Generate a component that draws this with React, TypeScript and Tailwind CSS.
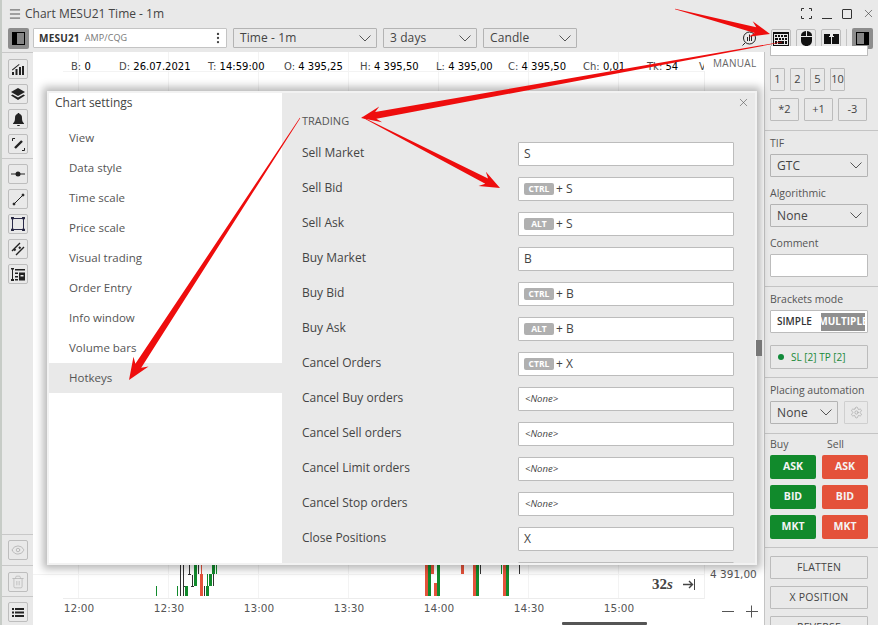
import { EllipsisVertical, Eye, Menu, Settings, Trash2, X } from "lucide-react";
import type { ReactNode } from "react";

const hotkeys: { label: string; mod?: string; key?: string; none?: boolean }[] = [
  { label: "Sell Market", key: "S" },
  { label: "Sell Bid", mod: "CTRL", key: "S" },
  { label: "Sell Ask", mod: "ALT", key: "S" },
  { label: "Buy Market", key: "B" },
  { label: "Buy Bid", mod: "CTRL", key: "B" },
  { label: "Buy Ask", mod: "ALT", key: "B" },
  { label: "Cancel Orders", mod: "CTRL", key: "X" },
  { label: "Cancel Buy orders", none: true },
  { label: "Cancel Sell orders", none: true },
  { label: "Cancel Limit orders", none: true },
  { label: "Cancel Stop orders", none: true },
  { label: "Close Positions", key: "X" },
  { label: "Reverse", none: true },
];

const navItems = ["View", "Data style", "Time scale", "Price scale", "Visual trading", "Order Entry", "Info window", "Volume bars"];

const infoItems = [
  ["B:", "0"],
  ["D:", "26.07.2021"],
  ["T:", "14:59:00"],
  ["O:", "4 395,25"],
  ["H:", "4 395,50"],
  ["L:", "4 395,00"],
  ["C:", "4 395,50"],
  ["Ch:", "0,01"],
  ["Tk:", "54"],
  ["V:", "54"],
];

// [x, y, w, h, color]
const candles: [number, number, number, number, string][] = [
  [156, 586, 1, 10, "#118a2c"],
  [177, 586, 1, 10, "#118a2c"],
  [180, 565, 1, 31, "#333"],
  [183, 565, 1, 31, "#333"],
  [183, 586, 3, 1, "#333"],
  [185, 586, 3, 10, "#118a2c"],
  [189, 565, 1, 9, "#333"],
  [188, 574, 3, 1, "#333"],
  [192, 575, 1, 11, "#333"],
  [191, 586, 3, 1, "#333"],
  [194, 565, 3, 21, "#118a2c"],
  [198, 565, 1, 9, "#333"],
  [201, 565, 1, 9, "#e4523a"],
  [200, 574, 3, 22, "#e4523a"],
  [204, 586, 1, 10, "#333"],
  [206, 586, 3, 10, "#118a2c"],
  [207, 574, 1, 12, "#118a2c"],
  [209, 574, 3, 12, "#118a2c"],
  [213, 574, 1, 12, "#333"],
  [212, 565, 3, 9, "#118a2c"],
  [216, 565, 1, 9, "#118a2c"],
  [425, 565, 3, 31, "#e4523a"],
  [428, 565, 3, 31, "#118a2c"],
  [431, 565, 3, 9, "#e4523a"],
  [434, 583, 3, 13, "#e4523a"],
  [437, 565, 3, 31, "#118a2c"],
  [461, 565, 3, 9, "#e4523a"],
  [473, 565, 3, 31, "#e4523a"],
  [476, 565, 3, 31, "#118a2c"],
  [480, 565, 1, 9, "#333"],
  [501, 565, 1, 9, "#118a2c"],
  [503, 565, 3, 31, "#e4523a"],
  [506, 565, 3, 31, "#118a2c"],
  [519, 565, 1, 9, "#333"],
];

const gridX = [78, 168, 258, 348, 438, 528, 618];
const timeLabels = ["12:00", "12:30", "13:00", "13:30", "14:00", "14:30", "15:00"];

function ToolBtn({ children, dim }: { children: ReactNode; dim?: boolean }) {
  return (
    <div className={`flex h-5 w-5 items-center justify-center rounded-[2px] border border-[#bdbdbd] ${dim ? "text-[#b5b5b5]" : "text-[#222]"}`}>
      {children}
    </div>
  );
}

function PanelToggle({ flip }: { flip?: boolean }) {
  return (
    <div className="flex h-[21px] w-[21px] items-center justify-center rounded-[2px] bg-[#8d8d8d]">
      <div className={`flex h-[13px] w-[13px] border border-black ${flip ? "flex-row-reverse" : ""}`}>
        <div className="w-[4px] bg-black" />
        <div className="flex-1 bg-[#858585]" />
      </div>
    </div>
  );
}

function Select({ value, className }: { value: string; className: string }) {
  return (
    <div className={`flex h-[23px] items-center justify-between rounded-[1px] border border-[#b3b3b3] pl-[6px] pr-[5px] text-[12px] tracking-[0.1px] text-[#444] ${className}`}>
      <span>{value}</span>
      <svg width="12" height="7" viewBox="0 0 12 7" fill="none" stroke="#555" strokeWidth="1">
        <path d="M.5.5 6 6l5.500-5.500" />
      </svg>
    </div>
  );
}

function Arrow({ from, to, head, spread, tail, neck }: { from: number[]; to: number[]; head: number; spread: number; tail: number; neck: number }) {
  const dx = to[0] - from[0];
  const dy = to[1] - from[1];
  const len = Math.hypot(dx, dy);
  const ux = dx / len;
  const uy = dy / len;
  const nx = -uy;
  const ny = ux;
  const bx = to[0] - ux * head;
  const by = to[1] - uy * head;
  const pts = [
    [from[0] + (nx * tail) / 2, from[1] + (ny * tail) / 2],
    [bx + (nx * neck) / 2 + ux * 3, by + (ny * neck) / 2 + uy * 3],
    [bx + nx * spread - ux * 2, by + ny * spread - uy * 2],
    to,
    [bx - nx * spread - ux * 2, by - ny * spread - uy * 2],
    [bx - (nx * neck) / 2 + ux * 3, by - (ny * neck) / 2 + uy * 3],
    [from[0] - (nx * tail) / 2, from[1] - (ny * tail) / 2],
  ];
  return <polygon points={pts.map((p) => p.join(",")).join(" ")} fill="#ee0d0d" />;
}

function HotkeyRow({ label, mod, keyName, none }: { label: string; mod?: string; keyName?: string; none?: boolean }) {
  return (
    <div className="flex h-[35px] shrink-0 items-start">
      <div className="w-[216px] pt-[2px] text-[12px] text-[#444]">{label}</div>
      <div className="flex h-6 w-[216px] items-center rounded-[1px] border border-[#bcbcbc] bg-white px-[5px] text-[12px] text-[#444]">
        {none && <span className="pl-px text-[9.5px] italic text-[#444]">&lt;None&gt;</span>}
        {mod && <span className="mr-[2px] flex h-[12px] w-[30px] items-center justify-center rounded-[2px] bg-[#b0b0b0] text-[8.500px] font-bold text-white">{mod}</span>}
        {mod && <span>+&nbsp;</span>}
        {keyName && <span>{keyName}</span>}
      </div>
    </div>
  );
}

export default function App() {
  return (
    <div className="relative flex h-[625px] w-[878px] flex-col overflow-hidden border-l-2 border-[#c7ccc7] bg-[#e9e9e9] font-['Open_Sans',sans-serif] text-[#444]">
      {/* title bar */}
      <div className="flex h-[26px] shrink-0 items-center pl-[6px] pr-[3px] pt-[1px]">
        <Menu size={14} strokeWidth={1.5} className="text-[#444]" />
        <span className="ml-[3px] text-[12px]">Chart MESU21 Time - 1m</span>
        <div className="ml-auto flex items-center gap-[10px] text-[#333]">
          <svg width="11" height="11" viewBox="0 0 11 11" fill="none" stroke="#333" strokeWidth="1">
            <path d="M.5 3V.5H3M8 .5h2.500V3M10.500 8v2.500H8M3 10.500H.5V8" />
          </svg>
          <div className="mt-[9px] h-px w-[10px] bg-[#333]" />
          <div className="h-[10px] w-[10px] rounded-[1px] border border-[#333]" />
          <X size={13} strokeWidth={1.1} />
        </div>
      </div>

      {/* toolbar */}
      <div className="flex h-[26px] shrink-0 items-start pl-[6px] pr-[5px] pt-[2px]">
        <PanelToggle />
        <div className="ml-[4px] flex h-[20px] w-[194px] items-center rounded-[1px] border border-[#c4c4c4] bg-white pl-[5px] pr-[1px]">
          <span className="text-[10px] font-bold tracking-[0.2px] text-[#333]">MESU21</span>
          <span className="ml-[5px] text-[9px] tracking-[0.1px] text-[#777]">AMP/CQG</span>
          <EllipsisVertical size={14} className="ml-auto text-[#444]" />
        </div>
        <Select value="Time - 1m" className="ml-[6px] !h-[20px] w-[144px]" />
        <Select value="3 days" className="ml-[6px] !h-[20px] w-[94px]" />
        <Select value="Candle" className="ml-[6px] !h-[20px] w-[94px]" />
        <div className="ml-auto flex items-center">
          <div className="mr-[14px] flex h-5 w-4 items-center justify-center">
            <svg width="16" height="16" viewBox="0 0 16 16" fill="none" stroke="#222" strokeWidth="1">
              <circle cx="8.500" cy="7" r="6" />
              <path d="M4 12 1.500 14.500M6.500 10V6M8.500 10V3.500M10.500 10V5" />
            </svg>
          </div>
          <ToolBtn>
            <svg width="16" height="14" viewBox="0 0 16 14" fill="#111">
              <path d="M0 0h16v14H0zM1 2v11h14V2z" />
              <path d="M2 3h2v2H2zM5 3h2v2H5zM8 3h2v2H8zM11 3h3v2h-3zM2 6h3v2H2zM6 6h2v2H6zM9 6h2v2H9zM12 6h2v2h-2zM2 9h2v3H2zM5 9h6v3H5zM12 9h2v3h-2z" />
            </svg>
          </ToolBtn>
          <div className="ml-[5px]">
            <ToolBtn>
              <svg width="11" height="15" viewBox="0 0 11 15" fill="#111">
                <path d="M5 0v5H0V4.500C0 2 2 .2 5 0zM6 0c3 .2 5 2 5 4.500V5H6zM0 6h11v3.500C11 12.800 8.800 15 5.500 15S0 12.800 0 9.500z" />
              </svg>
            </ToolBtn>
          </div>
          <div className="ml-[5px]">
            <ToolBtn>
              <svg width="15" height="10" viewBox="0 0 15 10" fill="#111">
                <path d="M0 0h6v2H5v1h2v7H0zM9 0h6v10H8V3h2V2H9z" />
              </svg>
            </ToolBtn>
          </div>
          <div className="mx-[5px] h-5 w-px bg-[#c4c4c4]" />
          <PanelToggle flip />
        </div>
      </div>

      <div className="flex min-h-0 flex-1">
        {/* left tools */}
        <div className="flex w-[31px] shrink-0 flex-col border-t border-[#c8c8c8] pl-[6px] pt-[6px]">
          <div className="flex flex-col gap-[5px] pb-[4px]">
            <ToolBtn>
              <svg width="12" height="12" viewBox="0 0 12 12" fill="#222">
                <path d="M0 9h2v3H0zM3.500 6h2v6h-2zM7 4h2v8H7zM10 3h2v9h-2zM0 6.500 7 1l.5.800L.5 7.500z" />
              </svg>
            </ToolBtn>
            <ToolBtn>
              <svg width="14" height="12" viewBox="0 0 14 12" fill="#222">
                <path d="M7 0l7 4-7 4-7-4zM1.500 6.500 7 9.600l5.500-3.100L14 7.500 7 12 0 7.500z" />
              </svg>
            </ToolBtn>
            <ToolBtn>
              <svg width="11" height="13" viewBox="0 0 11 13" fill="#222">
                <path d="M5.500 0C6.200 0 6.500.4 6.500 1 8.500 1.500 9 3 9 5c0 2.500.5 4 2 5.500V11H0v-.5C1.500 9 2 7.500 2 5c0-2 .5-3.500 2.500-4 0-.6.300-1 1-1zM4 12h3c0 .6-.7 1-1.500 1S4 12.600 4 12z" />
              </svg>
            </ToolBtn>
            <ToolBtn>
              <svg width="13" height="13" viewBox="0 0 13 13" fill="none" stroke="#222">
                <path d="M.5 3V.5H3M10 12.500h2.500V10" />
                <path d="M3 10 10 3" strokeWidth="2.400" />
              </svg>
            </ToolBtn>
          </div>
          <div className="-ml-[6px] mb-[5px] h-px bg-[#c8c8c8]" />
          <div className="flex flex-col gap-[5px]">
            <ToolBtn>
              <svg width="14" height="6" viewBox="0 0 14 6" fill="#222">
                <path d="M0 2.500h14v1H0z" />
                <circle cx="7" cy="3" r="2.500" />
              </svg>
            </ToolBtn>
            <ToolBtn>
              <svg width="13" height="13" viewBox="0 0 13 13" fill="#222" stroke="#222">
                <path d="M2 11 11 2" />
                <circle cx="2" cy="11" r="1" />
                <circle cx="11" cy="2" r="1" />
              </svg>
            </ToolBtn>
            <ToolBtn>
              <svg width="14" height="14" viewBox="0 0 14 14" fill="none" stroke="#2a2a4a">
                <rect x="1.500" y="1.500" width="11" height="11" />
                <path d="M.5 0h2v2h-2zM11.500 0h2v2h-2zM.5 12h2v2h-2zM11.500 12h2v2h-2z" fill="#222" />
              </svg>
            </ToolBtn>
            <ToolBtn>
              <svg width="14" height="14" viewBox="0 0 14 14" fill="none" stroke="#222" strokeWidth="1.400">
                <path d="M1 9 9 1M5 13l8-8" />
                <path d="M3 7l1.500 1.500M8 5l1.500 1.500" strokeWidth="2" />
              </svg>
            </ToolBtn>
            <ToolBtn>
              <svg width="14" height="13" viewBox="0 0 14 13" fill="#222">
                <path d="M0 0h3v1.500H2V11h1v2H0v-2h1V1.500H0zM4 1h10v1.500H4zM4 4.500h3V6H4zM4 8h3v1.500H4zM4 11h3v1.500H4zM8 4.500h6v8H8zM9.500 7v1.500h3V7z" />
              </svg>
            </ToolBtn>
          </div>
          <div className="mt-auto flex flex-col">
            <div className="-ml-[6px] mb-[5px] h-px bg-[#c8c8c8]" />
            <ToolBtn dim>
              <Eye size={14} strokeWidth={1.5} />
            </ToolBtn>
            <div className="-ml-[6px] mb-[6px] mt-[5px] h-px bg-[#c8c8c8]" />
            <ToolBtn dim>
              <Trash2 size={14} strokeWidth={1.3} />
            </ToolBtn>
            <div className="-ml-[6px] mb-[5px] mt-[4px] h-px bg-[#c8c8c8]" />
            <div className="mb-[3px]">
              <ToolBtn>
                <svg width="12" height="9" viewBox="0 0 12 9" fill="#222">
                  <path d="M0 0h2v2H0zM3 0h9v2H3zM0 3.500h2v2H0zM3 3.500h9v2H3zM0 7h2v2H0zM3 7h9v2H3z" />
                </svg>
              </ToolBtn>
            </div>
          </div>
        </div>

        {/* chart */}
        <div className="relative w-[731px] shrink-0 bg-white">
          <svg className="absolute left-0 top-0" width="731" height="573" viewBox="33 52 731 573">
            {gridX.map((x) => (
              <rect key={x} x={x} y={52} width={1} height={546} fill="#f3f3f3" />
            ))}
            <rect x={63} y={71} width={641} height={1} fill="#f3f3f3" />
            <rect x={33} y={574} width={672} height={1} fill="#f3f3f3" />
            <rect x={63} y={598} width={642} height={1} fill="#ececec" />
            <rect x={704} y={52} width={1} height={547} fill="#f0f0f0" />
            {candles.map(([x, y, w, h, c], i) => (
              <rect key={i} x={x} y={y} width={w} height={h} fill={c} />
            ))}
            {timeLabels.map((t, i) => (
              <text key={t} x={gridX[i] + 1} y={612} textAnchor="middle" fontFamily="DejaVu Sans" fontSize="10.500" fill="#555">
                {t}
              </text>
            ))}
            <text x={710} y={578} fontFamily="DejaVu Sans" fontSize="10.500" fill="#555">4 391,00</text>
            <text x={652} y={589} fontFamily="Liberation Serif" fontSize="15" fontWeight="bold" fill="#444">
              32<tspan fontStyle="italic">s</tspan>
            </text>
            <path d="M683 584.500h9M689 581l3.500 3.500L689 588" stroke="#444" strokeWidth="1.400" fill="none" />
            <rect x={694} y={579} width={1} height={11} fill="#444" />
            <rect x={722} y={611} width={12} height={1} fill="#555" />
            <path d="M746 611.500h12M751.500 605.500v12" stroke="#555" fill="none" />
            <rect x={562} y={622} width={85} height={3} rx={1} fill="#555" />
          </svg>

          <div className="relative flex h-[22px] items-start">
            <div className="grid flex-1 grid-cols-[48px_89px_76px_76px_76px_72px_75px_64px_52px_auto] overflow-hidden whitespace-nowrap pl-[38px] pt-[7px] font-['DejaVu_Sans',sans-serif] text-[10px] text-black">
              {infoItems.map(([k, v]) => (
                <span key={k}>
                  <span className="text-[#4a4a4a]">{k}</span> {v}
                </span>
              ))}
            </div>
            <div className="w-[60px] shrink-0 bg-white pl-[9px] pt-[4px] text-[10px] tracking-[0.3px] text-[#666]">MANUAL</div>
          </div>
        </div>

        {/* order panel */}
        <div className="flex min-w-0 flex-1 flex-col border-l border-[#c4c4c4] px-[5px] [&>*]:shrink-0">
          <div className="-mt-[6px] h-[10px] w-[98px] rounded-b-[1px] border border-t-0 border-[#bcbcbc] bg-white" />
          <div className="mt-[12px] flex gap-[5px] text-[11px] text-[#444]">
            {["1", "2", "5", "10"].map((n) => (
              <div key={n} className="flex h-[23px] w-[15px] items-center justify-center rounded-[1px] border border-[#bcbcbc]">{n}</div>
            ))}
          </div>
          <div className="mt-[7px] flex gap-[5px] text-[11px] text-[#444]">
            {["*2", "+1", "-3"].map((n) => (
              <div key={n} className="flex h-[23px] w-[29px] items-center justify-center rounded-[1px] border border-[#bcbcbc]">{n}</div>
            ))}
          </div>
          <div className="-mx-[5px] mt-[9px] h-px bg-[#c4c4c4]" />

          <div className="h-[23px] pt-[5px] text-[10.500px] leading-[15px] text-[#555]">TIF</div>
          <Select value="GTC" className="w-[98px]" />
          <div className="h-[27px] pt-[9px] text-[10.500px] leading-[15px] text-[#555]">Algorithmic</div>
          <Select value="None" className="w-[98px]" />
          <div className="h-[27px] pt-[9px] text-[10.500px] leading-[15px] text-[#555]">Comment</div>
          <div className="h-[23px] w-[98px] rounded-[1px] border border-[#bcbcbc] bg-white" />
          <div className="-mx-[5px] mt-[9px] h-px bg-[#c4c4c4]" />

          <div className="h-[23px] pt-[5px] text-[10.500px] leading-[15px] text-[#555]">Brackets mode</div>
          <div className="flex h-[23px] w-[98px] items-center rounded-[1px] border border-[#bcbcbc] bg-white pl-[6px] pr-[2px] text-[10px] font-semibold">
            <span className="w-[44px] text-[#333]">SIMPLE</span>
            <span className="flex h-[18px] w-[44px] items-center justify-center overflow-hidden bg-[#8f8f8f] font-bold text-white">MULTIPLE</span>
          </div>
          <div className="mt-[12px] flex h-[24px] w-[98px] items-center rounded-[1px] border border-[#bcbcbc] pl-[7px] text-[10px] text-[#1a8a3a]">
            <span className="mr-[7px] h-[6px] w-[6px] rounded-full bg-[#118a3a]" />
            SL [2] TP [2]
          </div>
          <div className="-mx-[5px] mt-[8px] h-px bg-[#c4c4c4]" />

          <div className="h-[23px] pt-[5px] text-[10.500px] leading-[15px] text-[#555]">Placing automation</div>
          <div className="flex gap-[6px]">
            <Select value="None" className="w-[68px]" />
            <div className="flex h-[23px] w-[24px] items-center justify-center rounded-[1px] border border-[#cfcfcf] text-[#aaa]">
              <Settings size={13} strokeWidth={1.4} />
            </div>
          </div>
          <div className="-mx-[5px] mt-[9px] h-px bg-[#c4c4c4]" />

          <div className="flex h-[21px] pt-[3px] text-[10.500px] leading-[15px] text-[#555]">
            <span className="w-[57px]">Buy</span>
            <span>Sell</span>
          </div>
          <div className="grid w-[98px] grid-cols-2 gap-x-[6px] gap-y-[6px] text-[10.500px] font-bold text-[#f4f4f4]">
            {["ASK", "BID", "MKT"].map((t) => [
              <div key={`b${t}`} className="flex h-[24px] items-center justify-center rounded-[2px] bg-[#118a2c]">{t}</div>,
              <div key={`s${t}`} className="flex h-[24px] items-center justify-center rounded-[2px] bg-[#e4523a]">{t}</div>,
            ])}
          </div>
          <div className="-mx-[5px] mt-[8px] h-px bg-[#c4c4c4]" />

          <div className="mt-[8px] flex flex-col gap-[7px] text-[10.500px] tracking-[0.2px] text-[#444]">
            {["FLATTEN", "X POSITION", "REVERSE"].map((t) => (
              <div key={t} className="flex h-[23px] w-[98px] shrink-0 items-center justify-center rounded-[1px] border border-[#bcbcbc]">{t}</div>
            ))}
          </div>
        </div>
      </div>

      {/* settings dialog */}
      <div className="absolute left-[45px] top-[91px] flex h-[474px] w-[710px] overflow-hidden border-2 border-[#f2f2f2] shadow-[0_0_8px_4px_rgba(0,0,0,0.28)]">
        <div className="w-[233px] shrink-0 bg-white">
          <div className="h-[30px] pl-[6px] pt-[1px] text-[12px] text-[#444]">Chart settings</div>
          <div>
            {navItems.map((item) => (
              <div key={item} className="flex h-[30px] items-center pl-[20px] text-[11.500px] text-[#555]">{item}</div>
            ))}
            <div className="flex h-[30px] items-center bg-[#e9e9e9] pl-[20px] text-[11.500px] text-[#555]">Hotkeys</div>
          </div>
        </div>
        <div className="relative min-w-0 flex-1 bg-[#e9e9e9] pl-[20px]">
          <X size={13} strokeWidth={1.1} className="absolute right-[5px] top-[3px] text-[#555]" />
          <div className="h-[49px] pt-[20px] text-[11px] text-[#555]">TRADING</div>
          <div className="flex flex-col">
            {hotkeys.map((h) => (
              <HotkeyRow key={h.label} label={h.label} mod={h.mod} keyName={h.key} none={h.none} />
            ))}
          </div>
        </div>
      </div>

      {/* chart scroll handle, sits on the dialog edge */}
      <div className="absolute left-[754px] top-[340px] h-4 w-[6px] bg-[#777]" />

      {/* annotation arrows */}
      <svg className="pointer-events-none absolute -left-[2px] top-0" width="878" height="625" viewBox="0 0 878 625">
        <Arrow from={[675, 9]} to={[770, 34]} head={18} spread={8} tail={0.5} neck={6} />
        <Arrow from={[782, 42]} to={[361, 118]} head={18} spread={8} tail={0.5} neck={7} />
        <Arrow from={[362, 117]} to={[500, 188]} head={18} spread={8} tail={0.5} neck={6} />
        <Arrow from={[300, 118]} to={[129, 380]} head={20} spread={9} tail={0.5} neck={7} />
      </svg>
    </div>
  );
}
